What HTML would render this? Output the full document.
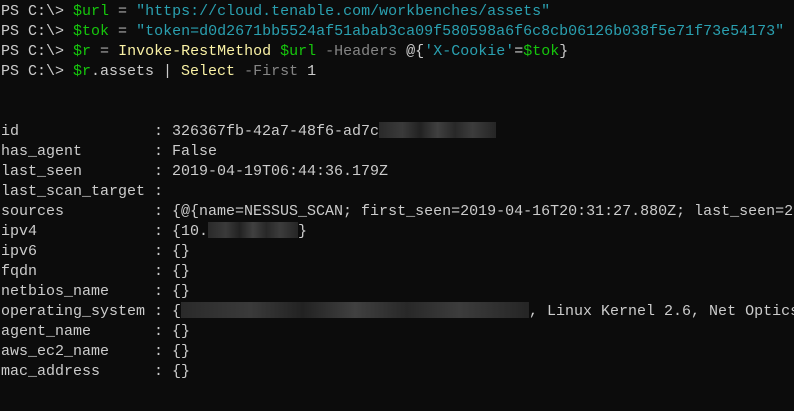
<!DOCTYPE html>
<html><head><style>
html,body{margin:0;padding:0;background:#0c0c0c;width:794px;height:411px;overflow:hidden}
pre{margin:0;padding:2px 0 0 1px;font-family:"Liberation Mono",monospace;font-size:15px;line-height:20px;color:#cccccc;white-space:pre;position:relative}
.v{color:#16c60c}.s{color:#2aa0b0}.c{color:#f9f1a5}.p{color:#858585}.o{color:#aaaaaa}
.b{display:inline-block;height:16px;vertical-align:-3px;background:linear-gradient(90deg,#2a2a2a 0,#3a3a3a 20%,#222 35%,#404040 50%,#282828 65%,#3c3c3c 80%,#252525 100%)}
</style></head><body>
<pre>PS C:\&gt; <span class="v">$url</span> <span class="o">=</span> <span class="s">"https://cloud.tenable.com/workbenches/assets"</span>
PS C:\&gt; <span class="v">$tok</span> <span class="o">=</span> <span class="s">"token=d0d2671bb5524af51abab3ca09f580598a6f6c8cb06126b038f5e71f73e54173"</span>
PS C:\&gt; <span class="v">$r</span> <span class="o">=</span> <span class="c">Invoke-RestMethod</span> <span class="v">$url</span> <span class="p">-Headers</span> @{<span class="s">'X-Cookie'</span>=<span class="v">$tok</span>}
PS C:\&gt; <span class="v">$r</span>.assets | <span class="c">Select</span> <span class="p">-First</span> 1


id               : 326367fb-42a7-48f6-ad7c<span class="b" style="width:117px"></span>
has_agent        : False
last_seen        : 2019-04-19T06:44:36.179Z
last_scan_target :
sources          : {@{name=NESSUS_SCAN; first_seen=2019-04-16T20:31:27.880Z; last_seen=2
ipv4             : {10.<span class="b" style="width:90px"></span>}
ipv6             : {}
fqdn             : {}
netbios_name     : {}
operating_system : {<span class="b" style="width:348px"></span>, Linux Kernel 2.6, Net Optics
agent_name       : {}
aws_ec2_name     : {}
mac_address      : {}</pre>
</body></html>
